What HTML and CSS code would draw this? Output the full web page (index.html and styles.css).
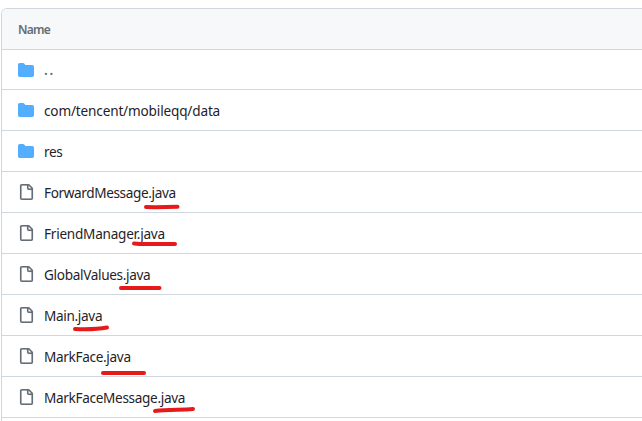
FILE: index.html
```html
<!DOCTYPE html>
<html lang="en">
<head>
<meta charset="utf-8">
<title>Files</title>
<link rel="stylesheet" href="styles.css">
</head>
<body>
<svg class="symbols" aria-hidden="true">
  <symbol id="folder" viewBox="0 0 16 16"><path d="M1.75 1A1.75 1.75 0 0 0 0 2.75v10.5C0 14.216.784 15 1.75 15h12.5A1.75 1.75 0 0 0 16 13.25v-8.5A1.75 1.75 0 0 0 14.25 3H7.5a.25.25 0 0 1-.2-.1l-.9-1.2C6.07 1.26 5.55 1 5 1H1.75Z"/></symbol>
  <symbol id="file" viewBox="0 0 16 16"><path d="M2 1.75C2 .784 2.784 0 3.75 0h6.586c.464 0 .909.184 1.237.513l2.914 2.914c.329.328.513.773.513 1.237v9.586A1.75 1.75 0 0 1 13.25 16h-9.5A1.75 1.75 0 0 1 2 14.250Zm1.750-.25a.25.25 0 0 0-.25.25v12.500c0 .138.112.25.25.25h9.500a.25.25 0 0 0 .25-.25V6h-2.750A1.750 1.750 0 0 1 9 4.250V1.500Zm6.750.062V4.250c0 .138.112.25.25.25h2.688l-.011-.013-2.914-2.914-.013-.011Z"/></symbol>
</svg>
<main class="files">
  <div class="head">Name</div>
  <div class="row parent"><svg class="icon folder"><use href="#folder"/></svg><span class="dots">. .</span></div>
  <div class="row"><svg class="icon folder"><use href="#folder"/></svg><span class="name path">com/tencent/mobileqq/data</span></div>
  <div class="row"><svg class="icon folder"><use href="#folder"/></svg><span class="name">res</span></div>
  <div class="row"><svg class="icon file"><use href="#file"/></svg><span class="name forward">ForwardMessage.java</span></div>
  <div class="row"><svg class="icon file"><use href="#file"/></svg><span class="name friend">FriendManager.java</span></div>
  <div class="row"><svg class="icon file"><use href="#file"/></svg><span class="name">GlobalValues.java</span></div>
  <div class="row"><svg class="icon file"><use href="#file"/></svg><span class="name">Main.java</span></div>
  <div class="row"><svg class="icon file"><use href="#file"/></svg><span class="name">MarkFace.java</span></div>
  <div class="row"><svg class="icon file"><use href="#file"/></svg><span class="name">MarkFaceMessage.java</span></div>
  <div class="row next"></div>
</main>
<svg class="marks" viewBox="0 0 642 421" aria-hidden="true">
  <path d="M146 207 155 207.2 177.500 206.700"/>
  <path d="M134 243.500 140 244H175"/>
  <path d="M121 288H159.500"/>
  <path d="M75 329C87 329.500 99 329 107 327.500"/>
  <path d="M103 373H144"/>
  <path d="M155 411C168 409.500 181 410 193 409"/>
</svg>
</body>
</html>
```

FILE: styles.css
```css
* { box-sizing: border-box; }
html { overflow: hidden; }
body {
  margin: 0;
  height: 421px;
  overflow: hidden;
  position: relative;
  background: #fff;
  color: #1f2328;
  font: 13.6px/20px "Noto Sans", sans-serif;
}
.symbols { display: none; }
.files {
  height: 413px;
  margin: 8px -10px 0 1px;
  border: 1px solid #d0d7de;
  border-bottom: 0;
  border-radius: 6px 0 0 0;
  overflow: hidden;
}
.head {
  height: 40px;
  padding: 11px 16px 0;
  background: #f6f8fa;
  color: #656d76;
  font-size: 12px;
  letter-spacing: -0.8px;
  line-height: 20px;
  font-weight: 600;
}
.row {
  display: flex;
  align-items: center;
  gap: 10px;
  height: 41px;
  padding: 0 16px;
  border-top: 1px solid #d0d7de;
}
.parent { height: 40px; }
.next { height: 3px; }
.icon { width: 16px; height: 16px; flex: none; }
.folder { fill: #54aeff; }
.file { fill: #656d76; stroke: #656d76; stroke-width: 0.15px; }
.name { white-space: nowrap; padding-top: 2px; letter-spacing: -0.33px; }
.path { letter-spacing: -0.17px; }
.forward { letter-spacing: -0.38px; }
.friend { letter-spacing: -0.25px; }
.dots { color: #656d76; font-weight: 600; letter-spacing: -0.9px; }
.marks {
  position: absolute;
  inset: 0;
  width: 642px;
  height: 421px;
  fill: none;
  stroke: #e71a1b;
  stroke-width: 4;
  stroke-linecap: round;
  stroke-linejoin: round;
}
```
